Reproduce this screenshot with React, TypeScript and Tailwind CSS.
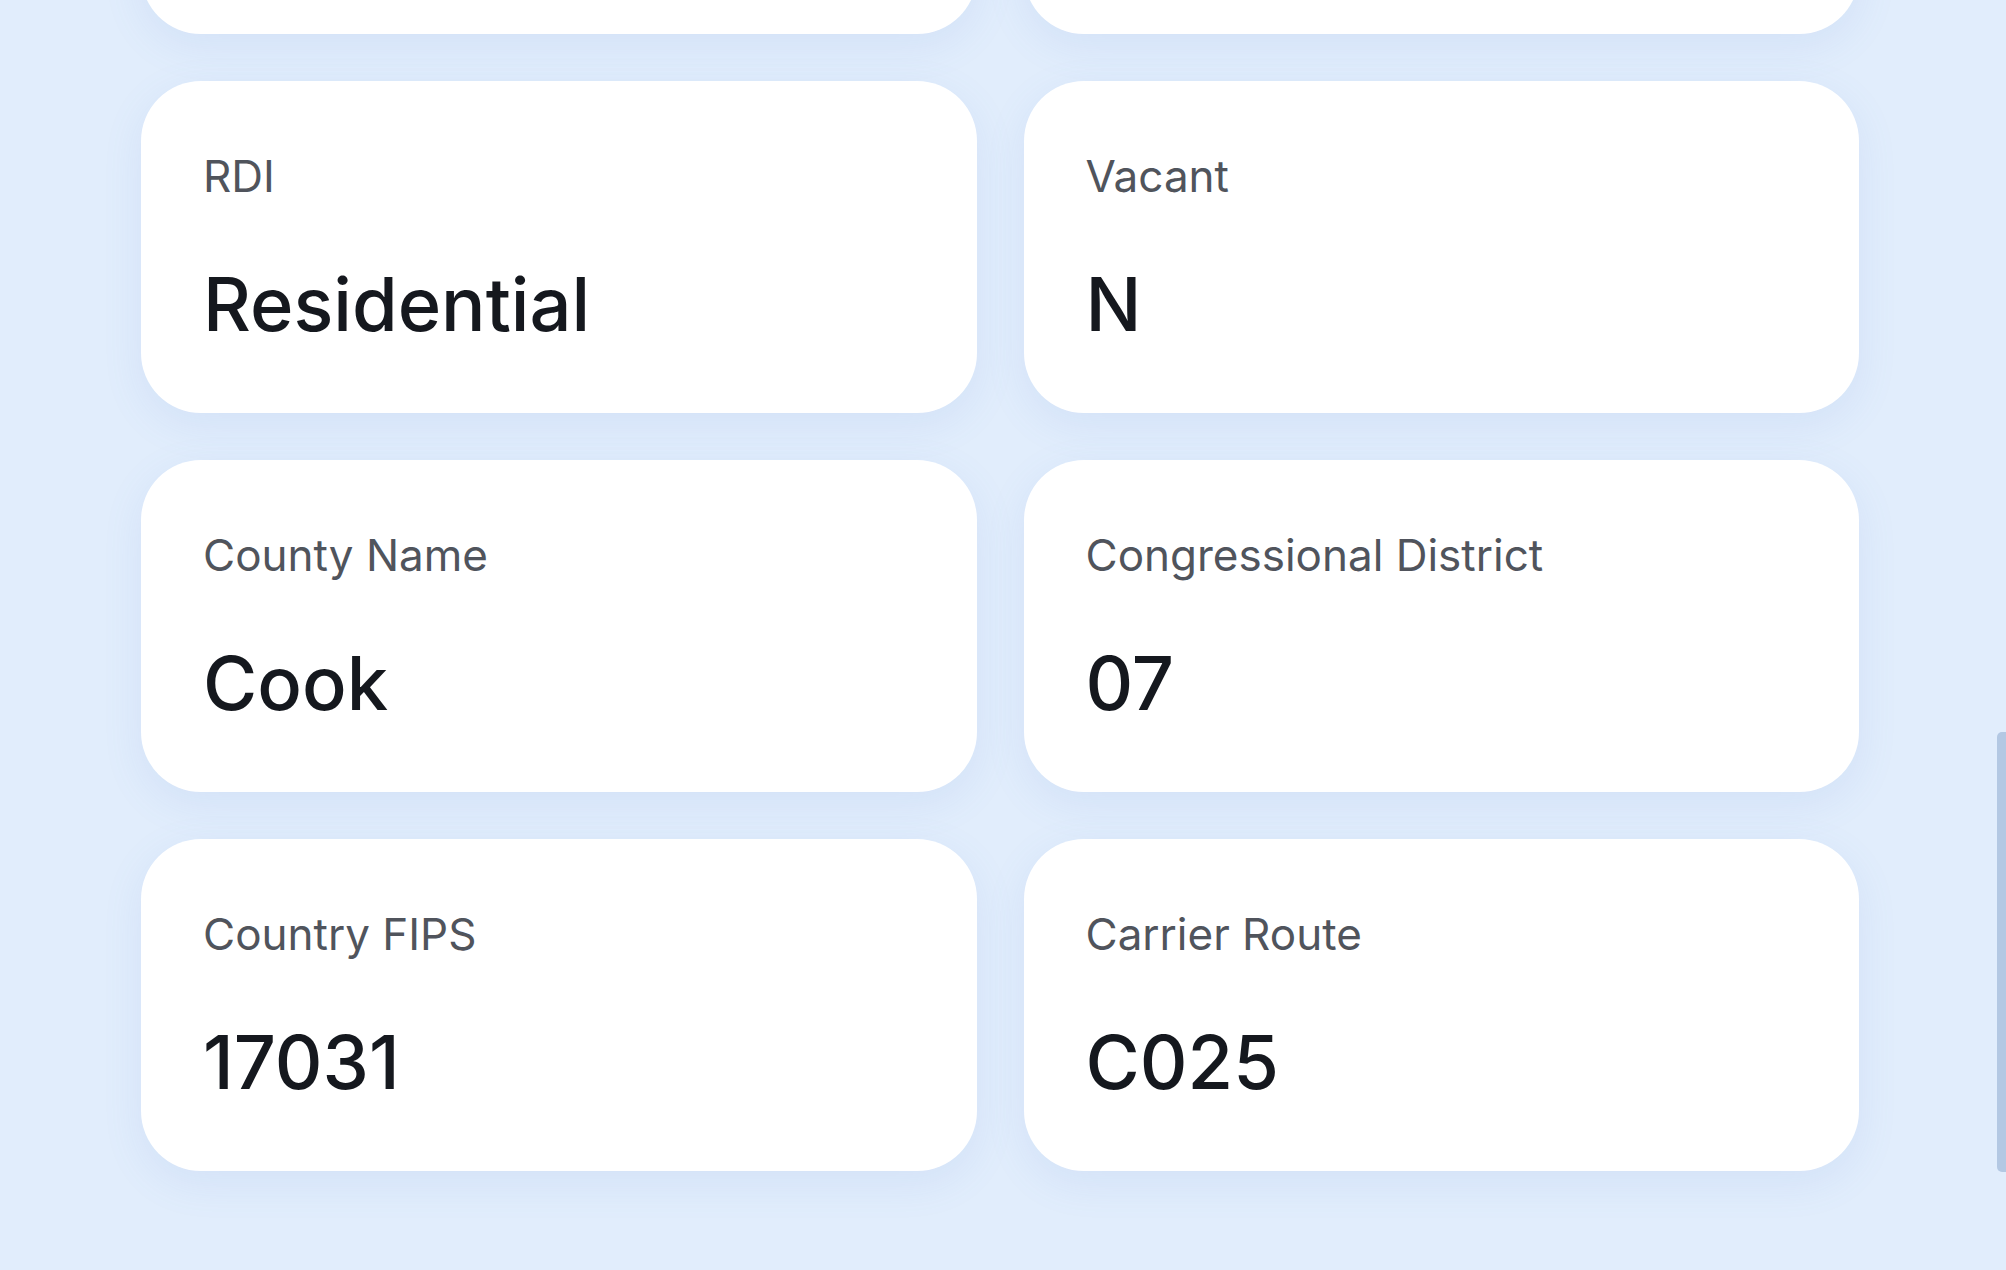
import React from "react";

type Item = { label: string; value: string };

const rows: Item[][] = [
  [
    { label: "RDI", value: "Residential" },
    { label: "Vacant", value: "N" },
  ],
  [
    { label: "County Name", value: "Cook" },
    { label: "Congressional District", value: "07" },
  ],
  [
    { label: "Country FIPS", value: "17031" },
    { label: "Carrier Route", value: "C025" },
  ],
];

function Card({ item }: { item?: Item }) {
  return (
    <div className="flex h-[332px] flex-col rounded-[60px] bg-white pl-[62px] pr-[40px] pt-[73px] shadow-[0_12px_40px_rgba(96,140,210,0.11)]">
      {item && (
        <>
          <div className="text-[44px] leading-[44px] text-[#50545c]">{item.label}</div>
          <div className="mt-[69px] text-[74px] font-medium leading-[74px] text-[#15181e]">
            {item.value}
          </div>
        </>
      )}
    </div>
  );
}

export default function App() {
  return (
    <div
      className="relative h-[1270px] w-full overflow-hidden bg-[#e1edfc]"
      style={{ fontFamily: "Inter, 'Noto Sans', sans-serif" }}
    >
      <div className="-mt-[298px] grid grid-cols-2 gap-x-[47px] gap-y-[47px] pl-[141px] pr-[147px]">
        <Card />
        <Card />
        {rows.flat().map((item, i) => (
          <Card key={i} item={item} />
        ))}
      </div>
      <div className="absolute right-0 top-[732px] h-[440px] w-[9px] rounded-l-[5px] bg-[#b3c8e3]" />
    </div>
  );
}
